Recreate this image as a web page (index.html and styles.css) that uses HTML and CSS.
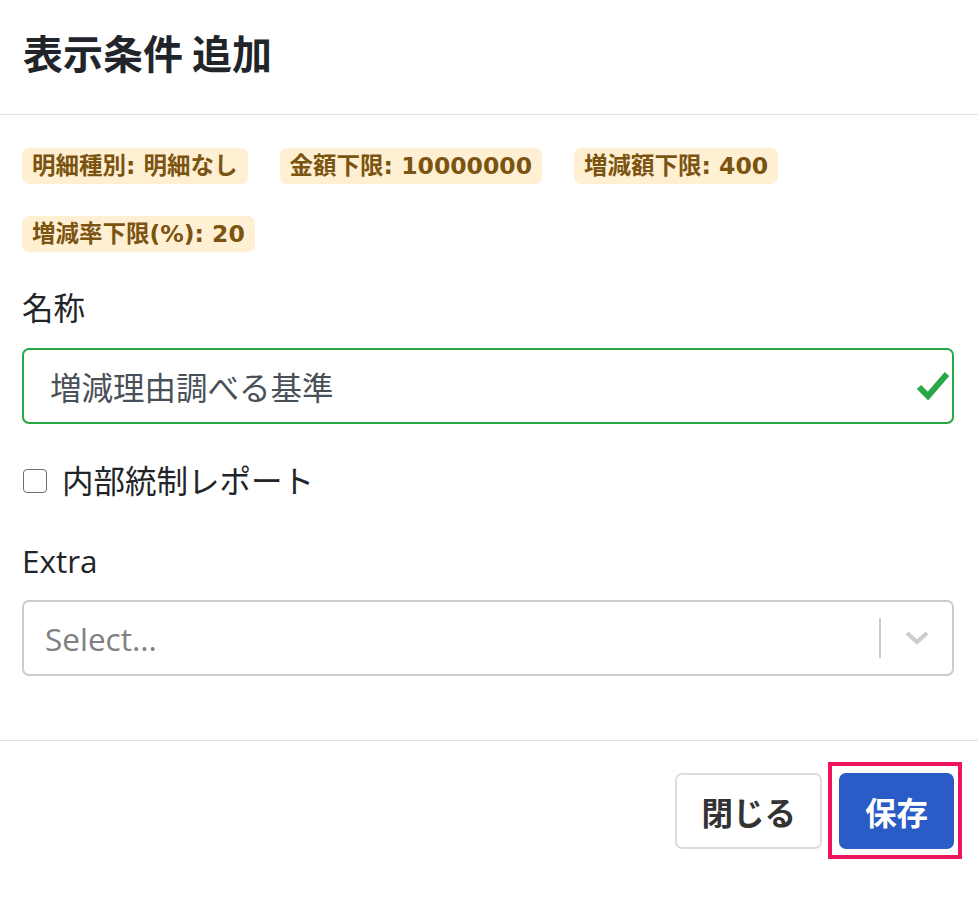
FILE: index.html
```html
<!DOCTYPE html>
<html lang="ja">
<head>
<meta charset="utf-8">
<title>表示条件 追加</title>
<link rel="stylesheet" href="styles.css">
</head>
<body>
<div class="modal">
  <div class="modal-header">
    <h1 class="modal-title">表示条件 追加</h1>
  </div>
  <div class="modal-body">
    <div class="badges">
      <span class="badge">明細種別: 明細なし</span>
      <span class="badge">金額下限: 10000000</span>
      <span class="badge">増減額下限: 400</span>
      <span class="badge">増減率下限(%): 20</span>
    </div>
    <div class="group">
      <label class="label cjk">名称</label>
      <div class="input valid">
        <span class="input-text">増減理由調べる基準</span>
        <svg class="check" width="34" height="30" viewBox="0 0 34 30"><path d="M3 16 L12 25 L31 3" fill="none" stroke="#28a745" stroke-width="6" stroke-linecap="butt" stroke-linejoin="miter"/></svg>
      </div>
    </div>
    <div class="check-row">
      <span class="checkbox"></span>
      <span class="check-label">内部統制レポート</span>
    </div>
    <div class="group">
      <label class="label latin">Extra</label>
      <div class="select">
        <span class="placeholder">Select...</span>
        <span class="sep"></span>
        <svg class="chev" width="26" height="16" viewBox="0 0 26 16"><path d="M3 3 L13 12 L23 3" fill="none" stroke="#cccccc" stroke-width="4"/></svg>
      </div>
    </div>
  </div>
  <div class="modal-footer">
    <button class="btn btn-light">閉じる</button>
    <span class="highlight"><button class="btn btn-primary">保存</button></span>
  </div>
</div>
</body>
</html>
```

FILE: styles.css
```css
html, body {
  margin: 0;
  padding: 0;
  background: #ffffff;
}
body {
  font-family: "Open Sans", "Noto Sans CJK JP", sans-serif;
  color: #212529;
  width: 978px;
}
.modal {
  display: flex;
  flex-direction: column;
}
.modal-header {
  padding: 22px 23px 32px;
  border-bottom: 1px solid #dee2e6;
}
.modal-title {
  margin: 0;
  font-family: "Noto Sans CJK JP", sans-serif;
  font-size: 40px;
  line-height: 60px;
  font-weight: 700;
  color: #212529;
}
.modal-body {
  padding: 33px 24px 64px 22px;
  display: flex;
  flex-direction: column;
}
.badges {
  display: flex;
  flex-wrap: wrap;
  gap: 32px;
}
.badge {
  display: inline-block;
  height: 36px;
  line-height: 36px;
  padding: 0 10px;
  border-radius: 7px;
  background: #fff0d3;
  color: #7b5412;
  font-family: "DejaVu Sans", "Noto Sans CJK JP", sans-serif;
  font-size: 23.5px;
  font-weight: 700;
}
.group {
  display: flex;
  flex-direction: column;
}
.badges + .group {
  margin-top: 36px;
}
.label {
  display: block;
  font-family: "Noto Sans CJK JP", sans-serif;
  font-size: 31.5px;
  line-height: 42px;
  margin-bottom: 18px;
  color: #212529;
}
.label.cjk {
  line-height: 37px;
  padding-bottom: 5px;
}
.label.latin {
  font-family: "Open Sans", "Noto Sans CJK JP", sans-serif;
}
.input {
  height: 76px;
  box-sizing: border-box;
  border: 2px solid #28a745;
  border-radius: 7px;
  display: flex;
  align-items: center;
  padding: 0 2px 0 26px;
}
.input-text {
  flex: 1;
  font-family: "Noto Sans CJK JP", sans-serif;
  font-size: 31.5px;
  color: #495057;
}
.check {
  display: block;
}
.check-row {
  display: flex;
  align-items: center;
  margin-top: 36px;
  height: 42px;
}
.checkbox {
  width: 24px;
  height: 24px;
  border: 1.5px solid #707070;
  border-radius: 4px;
  box-sizing: border-box;
  margin-left: 1px;
  margin-right: 15px;
  background: #fff;
}
.check-label {
  font-family: "Noto Sans CJK JP", sans-serif;
  font-size: 31.5px;
  line-height: 38px;
  padding-bottom: 4px;
  color: #212529;
}
.check-row + .group {
  margin-top: 38px;
}
.select {
  height: 76px;
  box-sizing: border-box;
  border: 2px solid #cccccc;
  border-radius: 7px;
  display: flex;
  align-items: center;
  padding: 0 22px 0 21px;
}
.placeholder {
  flex: 1;
  font-size: 31.5px;
  color: #808080;
}
.sep {
  width: 2px;
  height: 40px;
  background: #cccccc;
  margin-right: 23px;
}
.chev {
  display: block;
}
.modal-footer {
  border-top: 1px solid #dee2e6;
  display: flex;
  justify-content: flex-end;
  align-items: center;
  gap: 6px;
  padding: 21px 16px 46px;
}
.btn {
  height: 76px;
  box-sizing: border-box;
  border-radius: 7px;
  font-family: "Noto Sans CJK JP", sans-serif;
  font-size: 31.5px;
  font-weight: 700;
  padding: 0 24px;
  cursor: pointer;
  display: block;
}
.btn-light {
  background: #ffffff;
  border: 2px solid #dddddd;
  color: #333333;
}
.btn-primary {
  background: #2a5bc7;
  border: 2px solid #2a5bc7;
  color: #ffffff;
}
.highlight {
  display: block;
  border: 4px solid #f0145a;
  padding: 7px 4px 6px 7px;
}
```
